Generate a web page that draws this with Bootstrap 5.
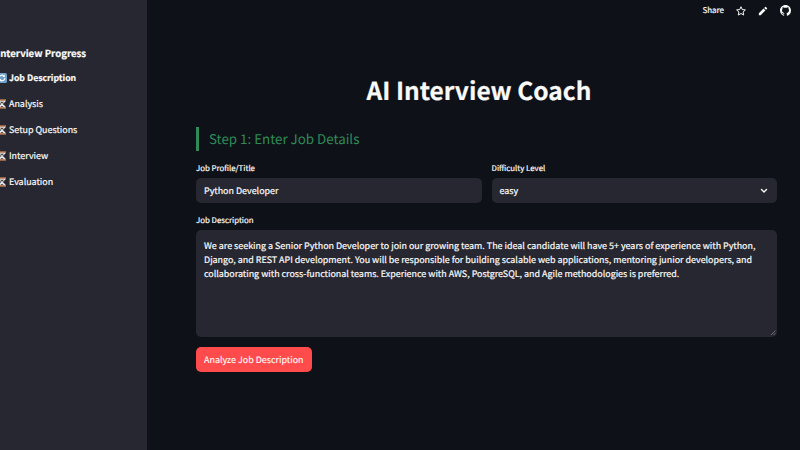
<!DOCTYPE html>
<html lang="en">
<head>
    <meta charset="UTF-8">
    <meta name="viewport" content="width=device-width, initial-scale=1.0">
    <title>AI Interview Coach</title>
    <link href="https://cdn.jsdelivr.net/npm/bootstrap@5.3.0/dist/css/bootstrap.min.css" rel="stylesheet">
    <script src="https://cdn.jsdelivr.net/npm/bootstrap@5.3.0/dist/js/bootstrap.bundle.min.js"></script>
    <style>
        body {
            background: #0e1117;
            color: #fafafa;
            font-family: "Noto Sans CJK SC", "Noto Sans", sans-serif;
            font-size: 8.93px;
            font-weight: 400;
            line-height: 14px;
            text-rendering: geometricPrecision;
            -webkit-text-stroke: .2px;
        }

        .sidebar {
            width: 147px;
            background: #262730;
            padding-top: 46px;
        }

        .sidebar h2 {
            font-size: 9.65px;
            line-height: 14px;
            margin: 0 0 11px -3px;
        }

        .steps {
            margin-left: -3px;
            gap: 12px;
        }

        .steps li {
            gap: 2px;
        }

        .steps li.fw-bold {
            font-size: 8.7px;
        }

        .steps svg {
            width: 10px;
            height: 10px;
        }

        .toolbar {
            height: 21px;
            padding-right: 9px;
            gap: 12px;
            font-size: 8px;
        }

        .content {
            padding: 51px 23px 0 49px;
        }

        .page-title {
            font-size: 24.5px;
            line-height: 38px;
            margin: 0 15px 17px 0;
        }

        .step-title {
            border-left: 3px solid #2e8b57;
            color: #2e8b57;
            padding-left: 10px;
            font-size: 13.35px;
            line-height: 24px;
            margin-bottom: 12px;
            -webkit-text-stroke: 0;
        }

        .field-row {
            gap: 10px;
            margin-bottom: 12px;
        }

        .form-label {
            display: block;
            font-size: 7.85px;
            line-height: 12px;
            margin-bottom: 3px;
        }

        .form-control,
        .form-control:focus,
        .select-box {
            background: #262730;
            color: #fafafa;
            border: 0;
            border-radius: 5px;
            font-size: 8.93px;
            font-weight: 400;
            line-height: 14px;
            padding: 5px 8px 6px;
            height: 25px;
            min-height: 0;
            text-rendering: geometricPrecision;
            -webkit-text-stroke: .2px;
        }

        .select-box {
            padding: 6px 8px 5px;
        }

        textarea.form-control,
        textarea.form-control:focus {
            height: 107px;
            padding-top: 9px;
            resize: none;
        }

        .description {
            margin-bottom: 10px;
        }

        .grip {
            right: 1px;
            bottom: 1px;
        }

        .btn-analyze,
        .btn-analyze:hover {
            display: block;
            background: #ff4b4b;
            color: #fff;
            border: 0;
            border-radius: 5px;
            font-size: 8.95px;
            line-height: 14px;
            padding: 6px 8px 5px;
            text-rendering: geometricPrecision;
            -webkit-text-stroke: .1px;
        }
    </style>
</head>
<body class="d-flex vh-100 overflow-hidden">
    <!-- Progress sidebar -->
    <aside class="sidebar flex-shrink-0 overflow-hidden">
        <h2 class="fw-bold text-nowrap">Interview Progress</h2>
        <ul class="steps list-unstyled d-flex flex-column mb-0" id="steps"></ul>
    </aside>

    <div class="flex-grow-1">
        <header class="toolbar d-flex align-items-center justify-content-end">
            <span class="share">Share</span>
            <svg width="10" height="10" viewBox="0 0 24 24" fill="none" stroke="#fafafa" stroke-width="2.4" stroke-linejoin="round"><path d="M12 1.8l3.1 6.8 7.4.8-5.5 5 1.5 7.3L12 18l-6.5 3.7L7 14.4l-5.5-5 7.4-.8z"/></svg>
            <svg width="10" height="10" viewBox="0 0 24 24" fill="#fafafa"><path d="M2 17.5V22h4.5L17.8 10.7l-4.5-4.5zM21.5 7a1.5 1.5 0 0 0 0-2.1l-2.4-2.4a1.5 1.5 0 0 0-2.1 0l-2.2 2.2 4.5 4.5z"/></svg>
            <svg width="11" height="11" viewBox="0 0 16 16" fill="#fafafa"><path d="M8 0C3.58 0 0 3.58 0 8c0 3.54 2.29 6.53 5.47 7.59.4.07.55-.17.55-.38 0-.19-.01-.82-.01-1.49-2.01.37-2.53-.49-2.69-.94-.09-.23-.48-.94-.82-1.13-.28-.15-.68-.52-.01-.53.63-.01 1.08.58 1.23.82.72 1.21 1.87.87 2.33.66.07-.52.28-.87.51-1.07-1.78-.2-3.64-.89-3.64-3.95 0-.87.31-1.59.82-2.15-.08-.2-.36-1.02.08-2.12 0 0 .67-.21 2.2.82.64-.18 1.32-.27 2-.27s1.36.09 2 .27c1.53-1.04 2.2-.82 2.2-.82.44 1.1.16 1.92.08 2.12.51.56.82 1.27.82 2.15 0 3.07-1.87 3.75-3.65 3.95.29.25.54.73.54 1.48 0 1.07-.01 1.93-.01 2.2 0 .21.15.46.55.38A8.01 8.01 0 0 0 16 8c0-4.42-3.58-8-8-8z"/></svg>
        </header>

        <main class="content">
            <h1 class="page-title fw-bold text-center">AI Interview Coach</h1>
            <div class="step-title">Step 1: Enter Job Details</div>

            <form>
                <div class="field-row d-flex">
                    <div class="w-50">
                        <label class="form-label" for="jobTitle">Job Profile/Title</label>
                        <input type="text" class="form-control" id="jobTitle" value="Python Developer">
                    </div>
                    <div class="w-50">
                        <label class="form-label">Difficulty Level</label>
                        <div class="select-box d-flex align-items-center justify-content-between">
                            <span class="level">easy</span>
                            <svg width="10" height="10" viewBox="0 0 10 10" fill="none" stroke="#fafafa" stroke-width="1.4" stroke-linecap="round" stroke-linejoin="round"><path d="M2.5 3.5L5 5.9 7.5 3.5"/></svg>
                        </div>
                    </div>
                </div>
                <label class="form-label" for="jobDescription">Job Description</label>
                <div class="description position-relative">
                    <textarea class="form-control overflow-hidden" id="jobDescription" spellcheck="false">We are seeking a Senior Python Developer to join our growing team. The ideal candidate will have 5+ years of experience with Python, Django, and REST API development. You will be responsible for building scalable web applications, mentoring junior developers, and collaborating with cross-functional teams. Experience with AWS, PostgreSQL, and Agile methodologies is preferred.</textarea>
                    <svg class="grip position-absolute" width="5" height="6" viewBox="0 0 5 6" stroke="#85868c" stroke-width=".7"><path d="M0 5L4.5.5M2.5 5L4.5 3"/></svg>
                </div>
                <button type="button" class="btn btn-analyze">Analyze Job Description</button>
            </form>
        </main>
    </div>

    <script>
        const steps = ['Job Description', 'Analysis', 'Setup Questions', 'Interview', 'Evaluation'];
        const currentStep = 0;

        const refreshIcon = `<svg viewBox="0 0 10 10"><rect width="10" height="10" rx="1.5" fill="#6f9fc8"/><path d="M2.2 5.3A2.8 2.8 0 0 1 7 3M7.8 4.7A2.8 2.8 0 0 1 3 7" fill="none" stroke="#fff" stroke-width="1.1"/><path d="M7.8 1.6v2.3H5.5zM2.2 8.4V6.1h2.3z" fill="#fff"/></svg>`;
        const hourglassIcon = `<svg viewBox="0 0 10 10"><path d="M1.5 1h7v1.5L5.8 5l2.7 2.5V9h-7V7.5L4.2 5 1.5 2.5z" fill="#e6e8ec"/><path d="M3 2.8h4L5 4.8zM2.8 8.5L5 6.7l2.2 1.8z" fill="#4f4038"/><path d="M1 .9h8M1 9.1h8" stroke="#b8754c" stroke-width="1.5"/></svg>`;

        // Render the progress list
        document.getElementById('steps').innerHTML = steps.map((step, i) => `
            <li class="d-flex align-items-center text-nowrap ${i === currentStep ? 'fw-bold' : ''}">
                ${i === currentStep ? refreshIcon : hourglassIcon}
                <span>${step}</span>
            </li>
        `).join('');
    </script>
</body>
</html>
